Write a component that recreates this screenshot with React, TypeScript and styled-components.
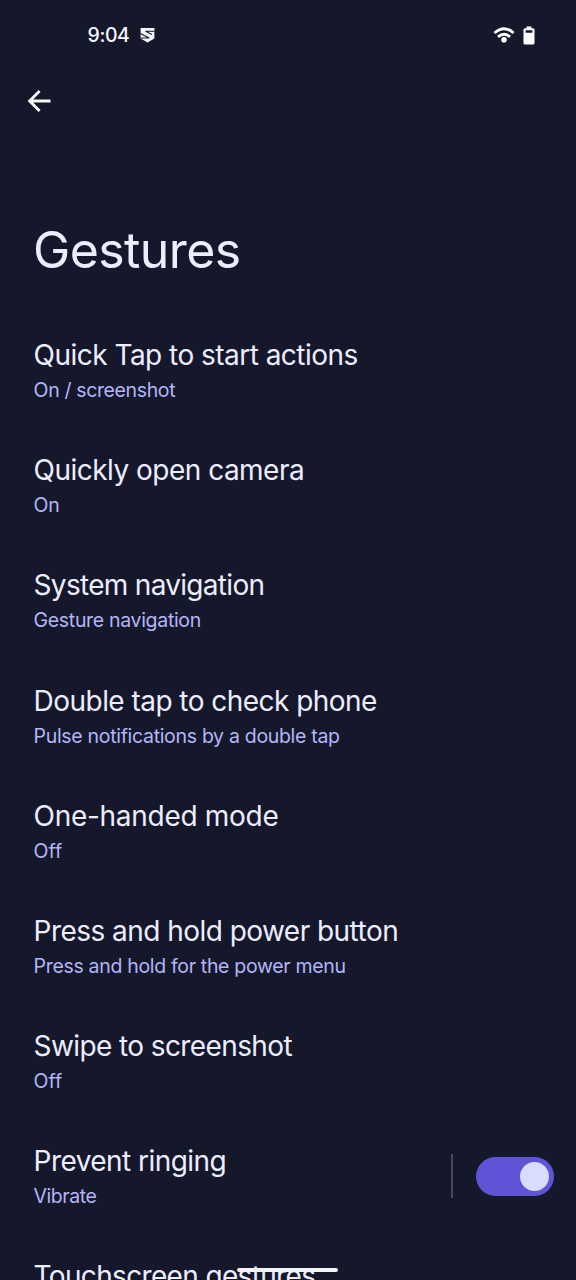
import React from 'react';
import styled, { createGlobalStyle } from 'styled-components';

const GlobalStyle = createGlobalStyle`
  * { box-sizing: border-box; }
  body { margin: 0; background: #15182b; overflow: hidden; }
`;

const Screen = styled.div`
  position: relative;
  display: flex;
  flex-direction: column;
  width: 576px;
  height: 1280px;
  overflow: hidden;
  background: #15182b;
  color: #ecedff;
  font-family: Inter, 'Liberation Sans', sans-serif;
  font-kerning: normal;
`;

const StatusBar = styled.header`
  display: flex;
  flex: none;
  align-items: center;
  justify-content: space-between;
  height: 70px;
  padding: 0 41px 0 87.5px;
`;

const StatusGroup = styled.div<{ $gap: number }>`
  display: flex;
  align-items: center;
  gap: ${({ $gap }) => $gap}px;
`;

const Clock = styled.span`
  font-size: 19.5px;
  font-weight: 500;
  line-height: 24px;
  letter-spacing: -0.4px;
  color: #f6f7ff;
`;

const Toolbar = styled.nav`
  display: flex;
  flex: none;
  align-items: center;
  height: 61px;
  padding-left: 25px;
`;

const BackButton = styled.button`
  display: flex;
  padding: 0;
  border: 0;
  background: none;
  color: #f8f8ff;
`;

const Heading = styled.h1`
  flex: none;
  margin: 89px 0 57.2px;
  padding-left: 33px;
  font-size: 50px;
  font-weight: 400;
  line-height: 60px;
  letter-spacing: -0.6px;
`;

const List = styled.main`
  display: flex;
  flex-direction: column;
`;

const Row = styled.section`
  display: flex;
  flex: none;
  justify-content: space-between;
  height: 115.15px;
  padding: 0 22px 0 33.6px;
`;

const Labels = styled.div`
  display: flex;
  flex-direction: column;
  gap: 5px;
`;

const Title = styled.span<{ $tracking: number }>`
  font-size: 28px;
  line-height: 36px;
  letter-spacing: ${({ $tracking }) => $tracking}px;
  white-space: nowrap;
`;

const Summary = styled.span<{ $tracking: number }>`
  font-size: 19.5px;
  line-height: 24px;
  letter-spacing: ${({ $tracking }) => $tracking}px;
  color: #b4b5f8;
  white-space: nowrap;
`;

const Control = styled.div`
  display: flex;
  align-items: center;
  gap: 23px;
  height: 44px;
  margin-top: 11px;
`;

const Divider = styled.span`
  width: 2px;
  height: 44px;
  background: #45475a;
`;

const Switch = styled.button`
  display: flex;
  align-items: center;
  justify-content: flex-end;
  width: 78px;
  height: 39px;
  padding: 0 5px;
  border: 0;
  border-radius: 20px;
  background: #6053d6;
`;

const Thumb = styled.span`
  width: 29px;
  height: 29px;
  border-radius: 50%;
  background: #dadcfd;
`;

const HomeBar = styled.div`
  position: absolute;
  left: 237px;
  top: 1268px;
  width: 101px;
  height: 4px;
  border-radius: 2px;
  background: #f1f3f4;
`;

type Item = {
  title: string;
  tracking: number;
  summary?: string;
  summaryTracking?: number;
  toggle?: boolean;
};

const items: Item[] = [
  { title: 'Quick Tap to start actions', tracking: -0.53, summary: 'On / screenshot', summaryTracking: -0.36 },
  { title: 'Quickly open camera', tracking: -0.52, summary: 'On', summaryTracking: -0.2 },
  { title: 'System navigation', tracking: -0.7, summary: 'Gesture navigation', summaryTracking: -0.32 },
  { title: 'Double tap to check phone', tracking: -0.54, summary: 'Pulse notifications by a double tap', summaryTracking: -0.31 },
  { title: 'One-handed mode', tracking: -0.29, summary: 'Off', summaryTracking: 0 },
  { title: 'Press and hold power button', tracking: -0.54, summary: 'Press and hold for the power menu', summaryTracking: -0.32 },
  { title: 'Swipe to screenshot', tracking: -0.6, summary: 'Off', summaryTracking: 0 },
  { title: 'Prevent ringing', tracking: -0.55, summary: 'Vibrate', summaryTracking: -0.45, toggle: true },
  { title: 'Touchscreen gestures', tracking: -0.66 },
];

const BadgeIcon = () => (
  <svg width="15" height="16" viewBox="0 0 15 16">
    <path d="M0.6 1H14.4V11.4L7.5 15.4L0.6 11.4Z" fill="#f4f5fc" />
    <path
      d="M14.6 4.2H5.6L12 7.6M0.4 6.4L9.2 11H0.4"
      fill="none"
      stroke="#15182b"
      strokeWidth="1.1"
    />
  </svg>
);

const WifiIcon = () => (
  <svg width="22" height="16" viewBox="0 0 22 16" fill="none" stroke="#fff" strokeWidth="2.9">
    <path d="M1.4 6Q11 -2.6 20.6 6" />
    <path d="M5 9.9Q11 4.5 17 9.9" />
    <circle cx="11" cy="12.8" r="2.8" fill="#fff" stroke="none" />
  </svg>
);

const BatteryIcon = () => (
  <svg width="12" height="19" viewBox="0 0 12 19">
    <path
      d="M3.5 0.5H8.5V2.3H10Q11.5 2.3 11.5 3.8V17Q11.5 18.5 10 18.5H2Q0.5 18.5 0.5 17V3.8Q0.5 2.3 2 2.3H3.5ZM2.6 4.2V6.7H9.4V4.2Z"
      fill="#fff"
      fillRule="evenodd"
    />
  </svg>
);

const BackIcon = () => (
  <svg width="28" height="28" viewBox="0 0 28 28" fill="none" stroke="currentColor" strokeWidth="2.8">
    <path d="M25.5 14H5M14.6 4L4.6 14L14.6 24" />
  </svg>
);

export default function App() {
  return (
    <Screen>
      <GlobalStyle />
      <StatusBar>
        <StatusGroup $gap={11}>
          <Clock>9:04</Clock>
          <BadgeIcon />
        </StatusGroup>
        <StatusGroup $gap={8}>
          <WifiIcon />
          <BatteryIcon />
        </StatusGroup>
      </StatusBar>
      <Toolbar>
        <BackButton aria-label="Back">
          <BackIcon />
        </BackButton>
      </Toolbar>
      <Heading>Gestures</Heading>
      <List>
        {items.map((item) => (
          <Row key={item.title}>
            <Labels>
              <Title $tracking={item.tracking}>{item.title}</Title>
              {item.summary && <Summary $tracking={item.summaryTracking ?? 0}>{item.summary}</Summary>}
            </Labels>
            {item.toggle && (
              <Control>
                <Divider />
                <Switch role="switch" aria-checked="true" aria-label={item.title}>
                  <Thumb />
                </Switch>
              </Control>
            )}
          </Row>
        ))}
      </List>
      <HomeBar />
    </Screen>
  );
}
